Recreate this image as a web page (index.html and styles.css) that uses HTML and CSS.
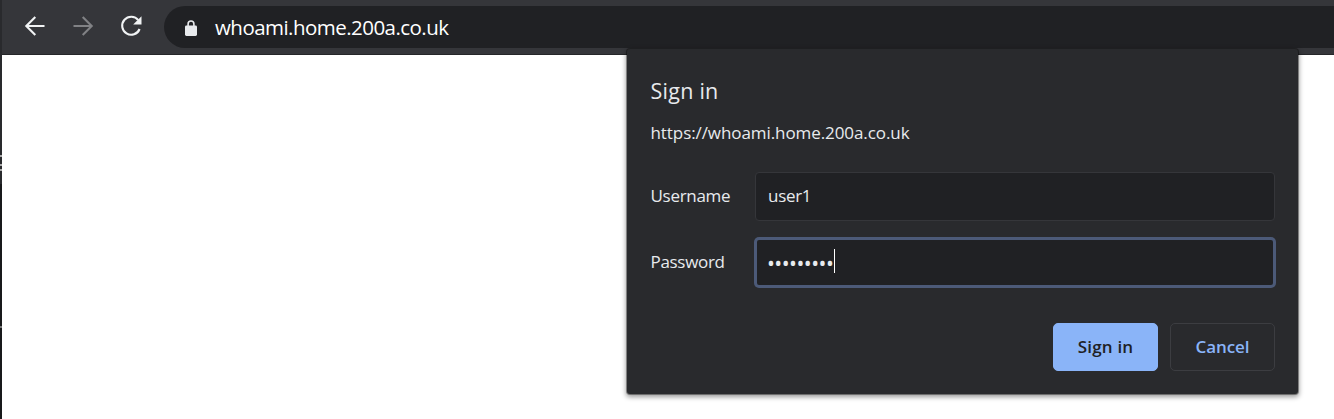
FILE: index.html
```
<!DOCTYPE html>
<html lang="en">
<head>
<meta charset="utf-8">
<title>whoami.home.200a.co.uk</title>
<link rel="stylesheet" href="styles.css">
</head>
<body>
<div class="window">
  <header class="toolbar">
    <svg class="nav" viewBox="0 0 24 24"><path d="M21.5 12H3.5M12.3 3L3.3 12l9 9"/></svg>
    <svg class="nav disabled" viewBox="0 0 24 24"><path d="M2.5 12H20.5M11.7 3l9 9-9 9"/></svg>
    <svg class="nav" viewBox="0 0 24 24"><path d="M19.3 6.2A9 9 0 1 0 20.6 15"/><path class="solid" d="M22.5 2.2V10.5H14.2Z"/></svg>
    <div class="omnibox">
      <svg class="lock" viewBox="0 0 12 16"><path class="shackle" d="M3.1 6V3.9a2.9 2.9 0 0 1 5.8 0V6"/><rect y="5.6" width="12" height="10.4" rx="1.4"/></svg>
      <span class="address">whoami.home.200a.co.uk</span>
    </div>
  </header>
  <main class="page"></main>
  <aside class="edge"><i class="mark m1"></i><i class="mark m2"></i><i class="mark m3"></i><i class="mark m4"></i></aside>
  <section class="dialog">
    <h1 class="title">Sign in</h1>
    <p class="origin">https://whoami.home.200a.co.uk</p>
    <div class="row">
      <label class="label">Username</label>
      <div class="field"><span class="value">user1</span></div>
    </div>
    <div class="row second">
      <label class="label">Password</label>
      <div class="field focused"><span class="dots">•••••••••</span><i class="caret"></i></div>
    </div>
    <div class="actions">
      <div class="button primary"><span class="caption wide">Sign in</span></div>
      <div class="button"><span class="caption">Cancel</span></div>
    </div>
  </section>
</div>
</body>
</html>
```
FILE: styles.css
```
* { box-sizing: border-box; }
body { margin: 0; font-family: "Open Sans", "Noto Sans", sans-serif; overflow: hidden; }
.window { position: relative; width: 1334px; height: 419px; background: #fff; overflow: hidden; }

.toolbar { display: flex; align-items: flex-start; height: 55px; padding-left: 23px; background: #35363a; border-bottom: 1px solid #252629; }
.nav { width: 24px; height: 24px; margin: 14px 24px 0 0; fill: none; stroke: #f1f3f4; stroke-width: 2.1; flex: none; }
.nav .solid { fill: #f1f3f4; stroke: none; }
.nav.disabled { stroke: #818285; }
.omnibox { display: flex; align-items: center; flex: 1; height: 42px; margin: 6px 0 0 -3px; padding-left: 21px; background: #202124; border-radius: 21px 0 0 21px; }
.lock { width: 12px; height: 16px; margin: 1px 18px 0 0; fill: #e8eaed; }
.shackle { fill: none; stroke: #e8eaed; stroke-width: 1.6; }
.address { padding-top: 1px; font-size: 20.5px; line-height: 29px; color: #fff; letter-spacing: -.54px; }

.edge { position: absolute; left: 0; top: 0; width: 2px; height: 419px; background: linear-gradient(#292a2d 184px, #18191b 184px); }
.mark { position: absolute; left: 0; width: 2px; height: 2px; background: #aaa; }
.m1 { top: 155px; }
.m2 { top: 164px; }
.m3 { top: 169px; }
.m4 { top: 326px; background: #777; }

.dialog { position: absolute; left: 627px; top: 49px; width: 671px; height: 345px; padding: 26px 23px 0 24px; background: #292a2d; border-radius: 3px; box-shadow: 0 0 0 1px rgba(0,0,0,.35), 0 2px 5px 1px rgba(0,0,0,.4); color: #e8eaed; }
.title { margin: 0 0 0 -.5px; height: 32px; line-height: 32px; font-size: 21.5px; font-weight: 400; letter-spacing: .25px; }
.origin { margin: 12px 0 0 -.5px; height: 28px; line-height: 28px; font-size: 17px; letter-spacing: -.08px; }
.row { display: flex; align-items: center; height: 49px; margin-top: 25px; font-size: 17px; letter-spacing: -.3px; }
.row.second { margin-top: 17px; }
.label { width: 104.5px; flex: none; margin-left: -.5px; padding-bottom: 2px; }
.field { display: flex; align-items: center; width: 520px; height: 49px; padding-left: 12px; background: #202124; border: 1px solid #35363a; border-radius: 4px; }
.value { padding-bottom: 2px; }
.focused { box-shadow: 0 0 0 1px #4c5a78; border: 2px solid #4c5a78; padding-left: 10px; }
.dots { font-size: 21px; letter-spacing: -.53px; padding: 1px 1px 0 0; line-height: 24px; }
.caret { width: 1px; height: 24px; margin-top: -3px; background: #fff; }
.actions { display: flex; justify-content: flex-end; gap: 12px; margin-top: 36px; }
.button { display: flex; align-items: center; justify-content: center; width: 105px; height: 48px; border: 1px solid #3c3d41; border-radius: 5px; font-size: 17px; font-weight: 600; color: #8ab4f8; }
.caption { padding-bottom: 2px; letter-spacing: -.1px; }
.wide { letter-spacing: .2px; }
.primary { background: #8ab4f8; border-color: #8ab4f8; color: #202124; }
```
